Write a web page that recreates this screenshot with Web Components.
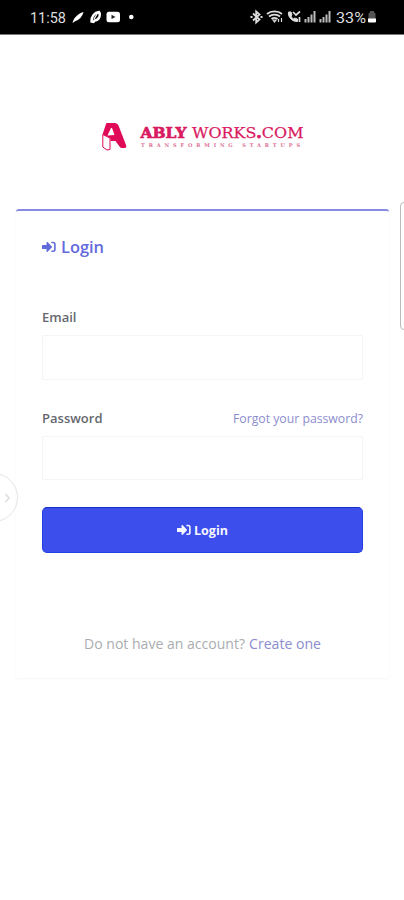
<!DOCTYPE html>
<html lang="en"><head><meta charset="utf-8"><title>Login</title>
<style>html,body{margin:0;height:900px;overflow:hidden;background:#fff}body{font-family:"Open Sans","Noto Sans",sans-serif}</style></head>
<body><login-screen></login-screen>
<script>
const define=(name,html,init)=>{
  const t=document.createElement('template');t.innerHTML=html;
  customElements.define(name,class extends HTMLElement{
    constructor(){super();this.attachShadow({mode:'open'}).append(t.content.cloneNode(true));}
    connectedCallback(){if(init)init(this);}
  });
};
// Single line of text set to an exact width, baseline at a fixed depth in its box
define('fit-text',`<style>:host{display:block}svg{display:block;overflow:visible}text{fill:currentColor}</style><svg><text x="0"></text></svg>`,el=>{
  const s=el.shadowRoot.querySelector('svg'),t=s.firstChild,w=el.getAttribute('w'),size=+el.getAttribute('size');
  s.setAttribute('width',w);s.setAttribute('height',Math.round(size*1.4));
  t.setAttribute('y',Math.round(size*1.08));t.setAttribute('textLength',w);t.setAttribute('lengthAdjust','spacingAndGlyphs');
  t.style.fontSize=size+'px';t.textContent=el.getAttribute('text');
});
define('login-icon',`<style>:host{display:block}svg{display:block}</style>
<svg width="14" height="14" viewBox="0 0 14 14"><path fill="currentColor" d="M.6 5h3.900V2.600c0-.6.7-.9 1.100-.5l4.200 4.300c.3.3.3.8 0 1.100l-4.200 4.300c-.4.4-1.100.1-1.100-.5V9H.6C.3 9 0 8.700 0 8.400V5.600C0 5.300.3 5 .6 5z"/><path d="M10 2.500h1.100c1 0 1.800.7 1.800 1.700v5.400c0 1-.8 1.700-1.800 1.700H10" fill="none" stroke="currentColor" stroke-width="1.600" stroke-linecap="round"/></svg>`);
define('status-bar',`<style>:host{display:flex;align-items:center;justify-content:space-between;box-sizing:border-box;height:35px;padding:0 27px 0 30px;background:#000;color:#dedede;font-family:Roboto,sans-serif;border-bottom:1px solid #777}
div{display:flex;align-items:center}svg{display:block}</style>
<div><fit-text text="11:58" w="36" size="15.500"></fit-text>
<svg width="70" height="20" viewBox="66 8 70 20"><path d="M72.500 24c1-5 5-9 11-11-1 4-4 8-8 9z" fill="#fff"/><path d="M91.500 22.500c0-5 3-9 7.500-9.500 2 3 0 8.500-4.500 8.500l-1 1.500z" fill="none" stroke="#fff" stroke-width="2.400"/><path d="M94 20l3-5" stroke="#fff" stroke-width="1.300"/><rect x="106.500" y="12.800" width="13.500" height="10.400" rx="2.500" fill="#fff"/><path d="M111.500 15.800v4.200l4-2.100z" fill="#222"/><circle cx="131.300" cy="18" r="2.300" fill="#fff"/></svg></div>
<div><svg width="86" height="20" viewBox="250 8 86 20" fill="none" stroke="#ddd"><path d="M253 14.500l6.500 6-3.300 3V12.500l3.300 3-6.500 6" stroke-width="1.800"/><path d="M250.500 18h2M260.500 18h2" stroke-width="2.200"/><path d="M267 15c4-3.500 11-3.500 15 0M269 17.500c3-2.500 8-2.500 11 0M271.500 20c2-1.500 4-1.500 6 0" stroke-width="1.800"/><path d="M273 21l1.500 2 1.500-2zM278.500 20v3M281.500 19v4" stroke-width="1.200"/><path d="M288.500 13c-1 5 4 10 9 9.500v-2.500l-3-1-1 1c-1-.5-2-1.500-2.500-3l1-1-1-3z" fill="#ddd"/><path d="M293 13l3 3 4-3.500M299.500 18v5" stroke-width="1.700"/><path d="M305.500 20v3.500M308.500 18v5.500M311.500 15.500v8M314.500 12v11.500M320.500 20v3.500M323.500 18v5.500M326.500 15.500v8M329.500 12v11.500" stroke-width="2" stroke="#bbb"/></svg>
<fit-text text="33%" w="30" size="15.500"></fit-text>
<svg width="11" height="20" viewBox="366 8 11 20"><path d="M368.500 15q0-1.500 1.500-1.500V12h4v1.500q1.500 0 1.500 1.500v5h-7z" fill="#555"/><path d="M368 19.500h8v3q0 1-1 1h-6q-1 0-1-1z" fill="#fff"/></svg></div>`);
define('brand-logo',`<style>:host{display:block;height:34px}svg{display:block}</style>
<svg width="206" height="34" viewBox="100 119 206 34"><path d="M106.500 123h8.500q2.500 0 3.500 2.500l7.500 19.500q1 3-1.500 3h-2.500q-1.500 0-2.500-1.500l-4-5.500h-5v-2.500l-8-4 3-9q.5-2 1-2.500zM111 128l-3.500 7.500 7-.5-2.500-7z" fill="#df0b59" fill-rule="evenodd"/><path d="M102.800 134.500l7.200 3.500v11.500l-3 .5-4.200-3z" fill="#fff" stroke="#df0b59" stroke-width="1"/>
<g fill="#d91b62" stroke="#d91b62" font-family="'DejaVu Serif',serif"><text x="140.500" y="138" font-size="15" font-weight="bold" textLength="46" lengthAdjust="spacingAndGlyphs" stroke-width=".7">ABLY</text><text x="192" y="138" font-size="15" textLength="111.500" lengthAdjust="spacingAndGlyphs" stroke-width=".25">WORKS<tspan font-weight="bold" stroke-width=".8">.</tspan>COM</text><text x="141" y="146.700" font-size="5" textLength="159" fill="#dc6f96" stroke="none" font-weight="bold">TRANSFORMING STARTUPS</text></g></svg>`);
define('field-group',`<style>:host{display:block}.top{display:flex;justify-content:space-between;height:28px}.box{box-sizing:border-box;height:45px;border:1px solid #f4f4f5;border-radius:2px;background:#fff}:host([short]) .box{height:44px}:host([short]) .top{height:27px}</style><div class="top"><slot></slot></div><div class="box"></div>`);
define('login-button',`<style>:host{display:flex;justify-content:center;align-items:center;gap:3px;box-sizing:border-box;height:46px;padding:0 1px 1px 0;border:1px solid #2240e4;border-width:1.500px;border-top-color:#1730c5;border-radius:5px;background:#3c4eec;color:#f6f6ff}</style><slot></slot>`);
define('login-card',`<style>:host{display:block;box-sizing:border-box;width:373px;height:469px;margin-left:16px;padding:25px 26px 0;border-top:2px solid #878be4;border-radius:3px;box-shadow:0 1px 3px rgba(0,0,0,.045)}</style><slot></slot>`);
define('login-screen',`<style>:host{display:block;position:relative;width:404px;height:900px;overflow:hidden;background:#fff}
brand-logo{margin:84px 0 56px 100px}.head{display:flex;align-items:center;gap:5px;color:#626bdc;height:22px}.head fit-text{font-weight:600}
field-group{color:#65686e}.email{margin-top:49px}.email .label{padding-top:1px}.pass{margin-top:29px}.label{font-weight:600}.link{color:#8b8dce}
login-button{margin-top:27px}login-button fit-text{font-weight:700}.foot{display:flex;justify-content:center;gap:4px;margin-top:80px;color:#aaadb0}
.handle{position:absolute;left:400px;top:202px;width:12px;height:128px;box-sizing:border-box;border:1px solid #bbb;border-radius:4px;background:#fff}
.tab{position:absolute;left:-31px;top:473px;width:49px;height:49px;box-sizing:border-box;border:1.500px solid #e4e4e4;border-radius:50%}.tab svg{position:absolute;right:6px;top:18px}</style>
<status-bar></status-bar><brand-logo></brand-logo>
<login-card><div class="head"><login-icon></login-icon><fit-text text="Login" w="43" size="16"></fit-text></div>
<field-group class="email"><fit-text class="label" text="Email" w="34.500" size="12.500"></fit-text></field-group>
<field-group class="pass" short><fit-text class="label" text="Password" w="60.500" size="12.500"></fit-text><fit-text class="link" text="Forgot your password?" w="130" size="12.500"></fit-text></field-group>
<login-button><login-icon></login-icon><fit-text text="Login" w="34" size="12.500"></fit-text></login-button>
<div class="foot"><fit-text text="Do not have an account?" w="161" size="14.500"></fit-text><fit-text class="link" text="Create one" w="72" size="14.500"></fit-text></div></login-card>
<div class="handle"></div><div class="tab"><svg width="7" height="12" viewBox="0 0 7 12"><path d="M1.500 2l3.500 4-3.500 4" fill="none" stroke="#ddd" stroke-width="1.500"/></svg></div>`);
</script></body></html>
